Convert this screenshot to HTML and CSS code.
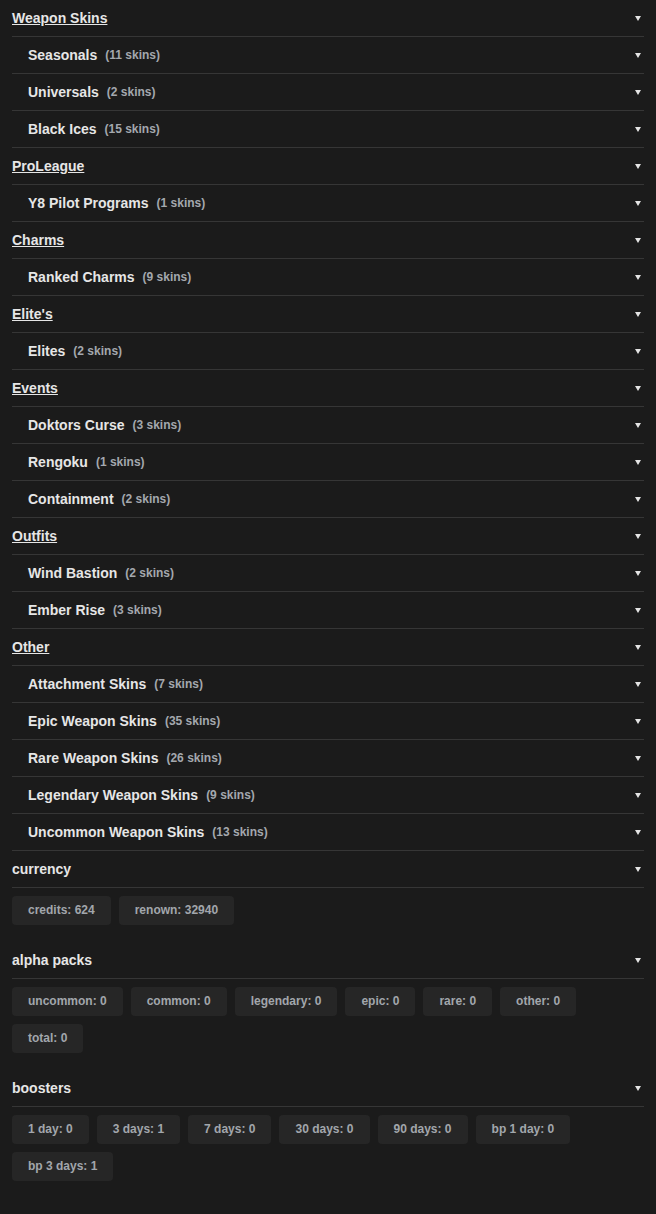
FILE: index.html
```html
<!DOCTYPE html>
<html lang="en">
<head>
  <meta charset="UTF-8">
  <meta name="viewport" content="width=device-width, initial-scale=1.0">
  <title>Inventory</title>
  <link rel="stylesheet" href="styles.css">
</head>
<body>
  <div class="panel">
    <div class="row group"><a class="name">Weapon Skins</a><span class="caret"></span></div>
    <div class="row sub"><span class="name">Seasonals</span><span class="count">(11 skins)</span><span class="caret"></span></div>
    <div class="row sub"><span class="name">Universals</span><span class="count">(2 skins)</span><span class="caret"></span></div>
    <div class="row sub"><span class="name">Black Ices</span><span class="count">(15 skins)</span><span class="caret"></span></div>

    <div class="row group"><a class="name">ProLeague</a><span class="caret"></span></div>
    <div class="row sub"><span class="name">Y8 Pilot Programs</span><span class="count">(1 skins)</span><span class="caret"></span></div>

    <div class="row group"><a class="name">Charms</a><span class="caret"></span></div>
    <div class="row sub"><span class="name">Ranked Charms</span><span class="count">(9 skins)</span><span class="caret"></span></div>

    <div class="row group"><a class="name">Elite's</a><span class="caret"></span></div>
    <div class="row sub"><span class="name">Elites</span><span class="count">(2 skins)</span><span class="caret"></span></div>

    <div class="row group"><a class="name">Events</a><span class="caret"></span></div>
    <div class="row sub"><span class="name">Doktors Curse</span><span class="count">(3 skins)</span><span class="caret"></span></div>
    <div class="row sub"><span class="name">Rengoku</span><span class="count">(1 skins)</span><span class="caret"></span></div>
    <div class="row sub"><span class="name">Containment</span><span class="count">(2 skins)</span><span class="caret"></span></div>

    <div class="row group"><a class="name">Outfits</a><span class="caret"></span></div>
    <div class="row sub"><span class="name">Wind Bastion</span><span class="count">(2 skins)</span><span class="caret"></span></div>
    <div class="row sub"><span class="name">Ember Rise</span><span class="count">(3 skins)</span><span class="caret"></span></div>

    <div class="row group"><a class="name">Other</a><span class="caret"></span></div>
    <div class="row sub"><span class="name">Attachment Skins</span><span class="count">(7 skins)</span><span class="caret"></span></div>
    <div class="row sub"><span class="name">Epic Weapon Skins</span><span class="count">(35 skins)</span><span class="caret"></span></div>
    <div class="row sub"><span class="name">Rare Weapon Skins</span><span class="count">(26 skins)</span><span class="caret"></span></div>
    <div class="row sub"><span class="name">Legendary Weapon Skins</span><span class="count">(9 skins)</span><span class="caret"></span></div>
    <div class="row sub"><span class="name">Uncommon Weapon Skins</span><span class="count">(13 skins)</span><span class="caret"></span></div>

    <div class="row"><span class="name">currency</span><span class="caret"></span></div>
    <div class="chips">
      <span class="chip">credits: 624</span>
      <span class="chip">renown: 32940</span>
    </div>

    <div class="row"><span class="name">alpha packs</span><span class="caret"></span></div>
    <div class="chips">
      <span class="chip">uncommon: 0</span>
      <span class="chip">common: 0</span>
      <span class="chip">legendary: 0</span>
      <span class="chip">epic: 0</span>
      <span class="chip">rare: 0</span>
      <span class="chip">other: 0</span>
      <span class="chip">total: 0</span>
    </div>

    <div class="row"><span class="name">boosters</span><span class="caret"></span></div>
    <div class="chips">
      <span class="chip">1 day: 0</span>
      <span class="chip">3 days: 1</span>
      <span class="chip">7 days: 0</span>
      <span class="chip">30 days: 0</span>
      <span class="chip">90 days: 0</span>
      <span class="chip">bp 1 day: 0</span>
      <span class="chip">bp 3 days: 1</span>
    </div>
  </div>
</body>
</html>
```

FILE: styles.css
```css
body {
  margin: 0;
  background: #1b1b1b;
  color: #e6e6e6;
  font-family: "Liberation Sans", Arial, sans-serif;
}
.panel {
  padding: 0 12px;
}
.row {
  display: flex;
  align-items: center;
  padding: 10px 0;
  line-height: 16px;
  border-bottom: 1px solid #363636;
  font-size: 14px;
  font-weight: bold;
}
.row.sub {
  padding-left: 16px;
}
.name {
  color: #e6e6e6;
}
.group .name {
  text-decoration: underline;
  cursor: pointer;
}
.count {
  margin-left: 8px;
  font-size: 12px;
  color: #a4a8ae;
}
.caret {
  margin-left: auto;
  margin-right: 3px;
  width: 0;
  height: 0;
  border-left: 3.5px solid transparent;
  border-right: 3.5px solid transparent;
  border-top: 5px solid #e4e4e4;
}
.chips {
  display: flex;
  flex-wrap: wrap;
  gap: 8px;
  margin: 8px 0 17px 0;
}
.chip {
  background: #262626;
  border-radius: 4px;
  padding: 7px 16px;
  line-height: 15px;
  font-size: 12px;
  font-weight: bold;
  color: #a2a6ac;
}
```
